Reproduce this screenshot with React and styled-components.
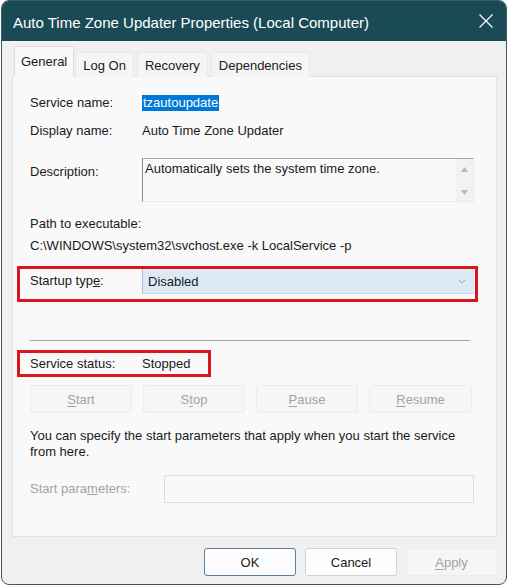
import React from "react";
import styled, { createGlobalStyle } from "styled-components";

const GlobalStyle = createGlobalStyle`
  html, body {
    margin: 0;
    padding: 0;
    background: #ffffff;
  }
  body {
    font-family: "Liberation Sans", Arial, sans-serif;
    font-size: 13px;
    color: #1a1a1a;
  }
`;

const Window = styled.div`
  width: 504px;
  height: 583px;
  margin-left: 1px;
  border: 1px solid #3f5960;
  border-radius: 8px;
  overflow: hidden;
  display: flex;
  flex-direction: column;
  background: #f0f0f0;
`;

const TitleBar = styled.div`
  height: 40px;
  flex-shrink: 0;
  background: #1b4a57;
  display: flex;
  align-items: center;
  justify-content: space-between;
  padding: 0 12px 0 11px;
`;

const Title = styled.span`
  color: #ffffff;
  font-size: 15px;
  margin-top: 2px;
`;

const CloseButton = styled.button`
  border: none;
  background: none;
  padding: 0;
  width: 16px;
  height: 16px;
  display: flex;
  align-items: center;
  justify-content: center;
  cursor: pointer;
`;

const Body = styled.div`
  flex: 1;
  padding: 7px 9px 0 10px;
  display: flex;
  flex-direction: column;
`;

const TabStrip = styled.div`
  display: flex;
  align-items: flex-end;
  height: 29px;
  padding-left: 2px;
  margin-bottom: -1px;
  position: relative;
  z-index: 1;
`;

const Tab = styled.div`
  height: ${(p) => (p.active ? "29px" : "24px")};
  padding: 0 ${(p) => (p.active ? "6px" : "7px")};
  margin-right: ${(p) => (p.active ? "1px" : "3px")};
  display: flex;
  align-items: center;
  background: ${(p) => (p.active ? "#f9f9f9" : "#f5f5f5")};
  border: 1px solid ${(p) => (p.active ? "#dedede" : "#e8e8e8")};
  border-bottom: ${(p) => (p.active ? "1px solid #f9f9f9" : "none")};
  color: #1a1a1a;
  font-size: 13px;
`;

const Panel = styled.div`
  height: 461px;
  box-sizing: border-box;
  background: #f9f9f9;
  border: 1px solid #e2e2e2;
  padding: 18px 22px 0 17px;
  display: flex;
  flex-direction: column;
`;

const Row = styled.div`
  display: flex;
  align-items: ${(p) => p.align || "center"};
  margin-top: ${(p) => p.top || 0}px;
  line-height: 16px;
`;

const Label = styled.span`
  width: ${(p) => p.width || 112}px;
  flex-shrink: 0;
  color: ${(p) => (p.disabled ? "#a3a3a3" : "#1a1a1a")};
  margin-top: ${(p) => p.offset || 0}px;
  line-height: 16px;
`;

const Line = styled.div`
  line-height: 16px;
  margin-top: ${(p) => p.top || 0}px;
`;

const Selected = styled.span`
  background: #0078d7;
  color: #ffffff;
  padding: 0 1px;
`;

const TextBox = styled.div`
  flex: 1;
  height: 44px;
  box-sizing: border-box;
  border-top: 1px solid #a8a8a8;
  border-left: 1px solid #8a8a8a;
  border-right: 1px solid #ececec;
  border-bottom: 1px solid #ececec;
  display: flex;
  background: #f9f9f9;
`;

const TextBoxText = styled.div`
  flex: 1;
  padding: 2px 0 0 2px;
`;

const ScrollBar = styled.div`
  width: 17px;
  background: #f2f2f2;
  display: flex;
  flex-direction: column;
  align-items: center;
  justify-content: space-between;
  padding: 8px 0 6px;
  box-sizing: border-box;
`;

const Highlight = styled.div`
  display: flex;
  align-items: ${(p) => p.align || "center"};
  border: 3px solid #d7161d;
  margin-left: -13px;
  margin-right: ${(p) => p.right || 0}px;
  margin-top: ${(p) => p.top || 0}px;
  height: ${(p) => p.height}px;
  width: ${(p) => (p.width ? `${p.width}px` : "auto")};
  box-sizing: border-box;
  padding: 0 0 0 10px;
  background: #f9f9f9;
`;

const Select = styled.div`
  flex: 1;
  height: 25px;
  margin-right: 1px;
  box-sizing: border-box;
  background: #dce9f6;
  border-left: 1px solid #a9bfd6;
  border-bottom: 1px solid #c7d8ea;
  display: flex;
  align-items: center;
  justify-content: space-between;
  padding: 0 8px 0 5px;
  font-size: 13px;
`;

const Separator = styled.div`
  height: 1px;
  background: #a6a6a6;
  margin: 38px 4px 0 0;
`;

const ServiceButtons = styled.div`
  display: flex;
  gap: 11px;
  margin-top: 8px;
`;

const DialogButton = styled.button`
  width: ${(p) => p.w || 102}px;
  height: 28px;
  box-sizing: border-box;
  font-family: "Liberation Sans", Arial, sans-serif;
  font-size: 13px;
  border-radius: 3px;
  border: 1px solid
    ${(p) => (p.primary ? "#5b7e9c" : p.disabled ? "#ececec" : "#d3d3d3")};
  background: ${(p) => (p.disabled ? "#f6f6f6" : "#fdfdfd")};
  color: ${(p) => (p.disabled ? "#a3a3a3" : "#1a1a1a")};
  padding: 0;
  cursor: default;

  u {
    text-decoration-thickness: 1px;
    text-underline-offset: 2px;
  }
`;

const ParamInput = styled.div`
  flex: 1;
  height: 28px;
  box-sizing: border-box;
  border: 1px solid #dcdcdc;
  background: #f9f9f9;
`;

const Footer = styled.div`
  display: flex;
  justify-content: flex-end;
  gap: 9px;
  margin-top: 11px;
`;

const Arrow = ({ up }) => (
  <svg width="7" height="5" viewBox="0 0 7 5">
    <path d={up ? "M0 5 L3.5 0 L7 5 Z" : "M0 0 L3.5 5 L7 0 Z"} fill="#b9b9b9" />
  </svg>
);

export default function App() {
  return (
    <>
      <GlobalStyle />
      <Window>
        <TitleBar>
          <Title>Auto Time Zone Updater Properties (Local Computer)</Title>
          <CloseButton aria-label="Close">
            <svg width="14" height="14" viewBox="0 0 14 14">
              <path
                d="M0.5 0.5 L13.5 13.5 M13.5 0.5 L0.5 13.5"
                stroke="#ffffff"
                strokeWidth="1.1"
                fill="none"
              />
            </svg>
          </CloseButton>
        </TitleBar>
        <Body>
          <TabStrip>
            <Tab active>General</Tab>
            <Tab>Log On</Tab>
            <Tab>Recovery</Tab>
            <Tab>Dependencies</Tab>
          </TabStrip>
          <Panel>
            <Row>
              <Label>Service name:</Label>
              <Selected>tzautoupdate</Selected>
            </Row>
            <Row top={12}>
              <Label>Display name:</Label>
              <span>Auto Time Zone Updater</span>
            </Row>
            <Row top={19} align="flex-start">
              <Label offset={6}>Description:</Label>
              <TextBox>
                <TextBoxText>Automatically sets the system time zone.</TextBoxText>
                <ScrollBar>
                  <Arrow up />
                  <Arrow />
                </ScrollBar>
              </TextBox>
            </Row>
            <Line top={14}>Path to executable:</Line>
            <Line top={6}>C:\WINDOWS\system32\svchost.exe -k LocalService -p</Line>
            <Highlight top={12} height={36} right={-4} align="flex-start">
              <Label offset={4}>
                Startup typ<u>e</u>:
              </Label>
              <Select>
                <span>Disabled</span>
                <svg width="8" height="5" viewBox="0 0 8 5">
                  <path d="M0.5 0.5 L4 4 L7.5 0.5" stroke="#a0a8b0" fill="none" />
                </svg>
              </Select>
            </Highlight>
            <Separator />
            <Highlight top={9} height={27} width={194}>
              <Label>Service status:</Label>
              <span>Stopped</span>
            </Highlight>
            <ServiceButtons>
              <DialogButton disabled>
                <u>S</u>tart
              </DialogButton>
              <DialogButton disabled>
                S<u>t</u>op
              </DialogButton>
              <DialogButton disabled>
                <u>P</u>ause
              </DialogButton>
              <DialogButton disabled w={103}>
                <u>R</u>esume
              </DialogButton>
            </ServiceButtons>
            <Line top={15}>
              You can specify the start parameters that apply when you start the service
              <br />
              from here.
            </Line>
            <Row top={15}>
              <Label disabled width={134}>
                Start para<u>m</u>eters:
              </Label>
              <ParamInput />
            </Row>
          </Panel>
          <Footer>
            <DialogButton primary w={92}>OK</DialogButton>
            <DialogButton w={92}>Cancel</DialogButton>
            <DialogButton disabled w={91}>
              <u>A</u>pply
            </DialogButton>
          </Footer>
        </Body>
      </Window>
    </>
  );
}
